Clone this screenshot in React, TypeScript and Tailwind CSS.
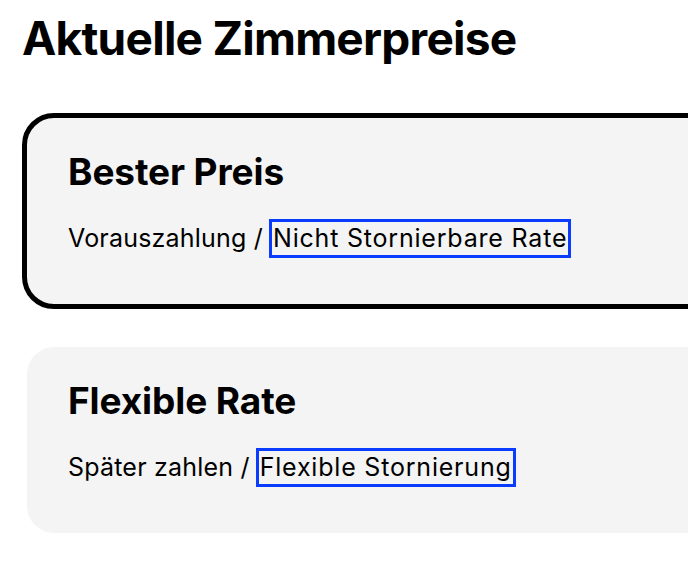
export default function App() {
  const rates = [
    { title: 'Bester Preis', pay: 'Vorauszahlung /', policy: 'Nicht Stornierbare Rate', selected: true },
    { title: 'Flexible Rate', pay: 'Später zahlen /', policy: 'Flexible Stornierung', selected: false },
  ];

  return (
    <div className="w-[688px] h-[582px] overflow-hidden bg-white text-black font-['Inter',sans-serif]">
      <div className="pl-[22px] pt-[10px]">
        <h1 className="text-[46px] font-bold leading-[56px] tracking-[-0.75px]">Aktuelle Zimmerpreise</h1>
        <div className="mt-[47px] flex flex-col gap-[33px]">
          {rates.map((r) => (
            <div
              key={r.title}
              className={
                r.selected
                  ? 'w-[720px] h-[196px] rounded-[32px] border-[5px] border-black bg-[#f4f4f4] px-[41px] pt-[32px]'
                  : 'w-[720px] h-[196px] rounded-[32px] border-[5px] border-white bg-[#f4f4f4] px-[41px] pt-[32px]'
              }
            >
              <h2 className="h-[44px] text-[37px] font-bold leading-[44px] tracking-[-0.1px]">{r.title}</h2>
              <p className="mt-[25px] flex h-[39px] items-center text-[25px] leading-[33px]">
                <span className="tracking-[0.2px]">{r.pay}</span>
                <span className="ml-[6px] flex h-[39px] items-center border-[3px] border-[#0a3cff] px-[1px] tracking-[0.8px]">
                  {r.policy}
                </span>
              </p>
            </div>
          ))}
        </div>
      </div>
    </div>
  );
}
